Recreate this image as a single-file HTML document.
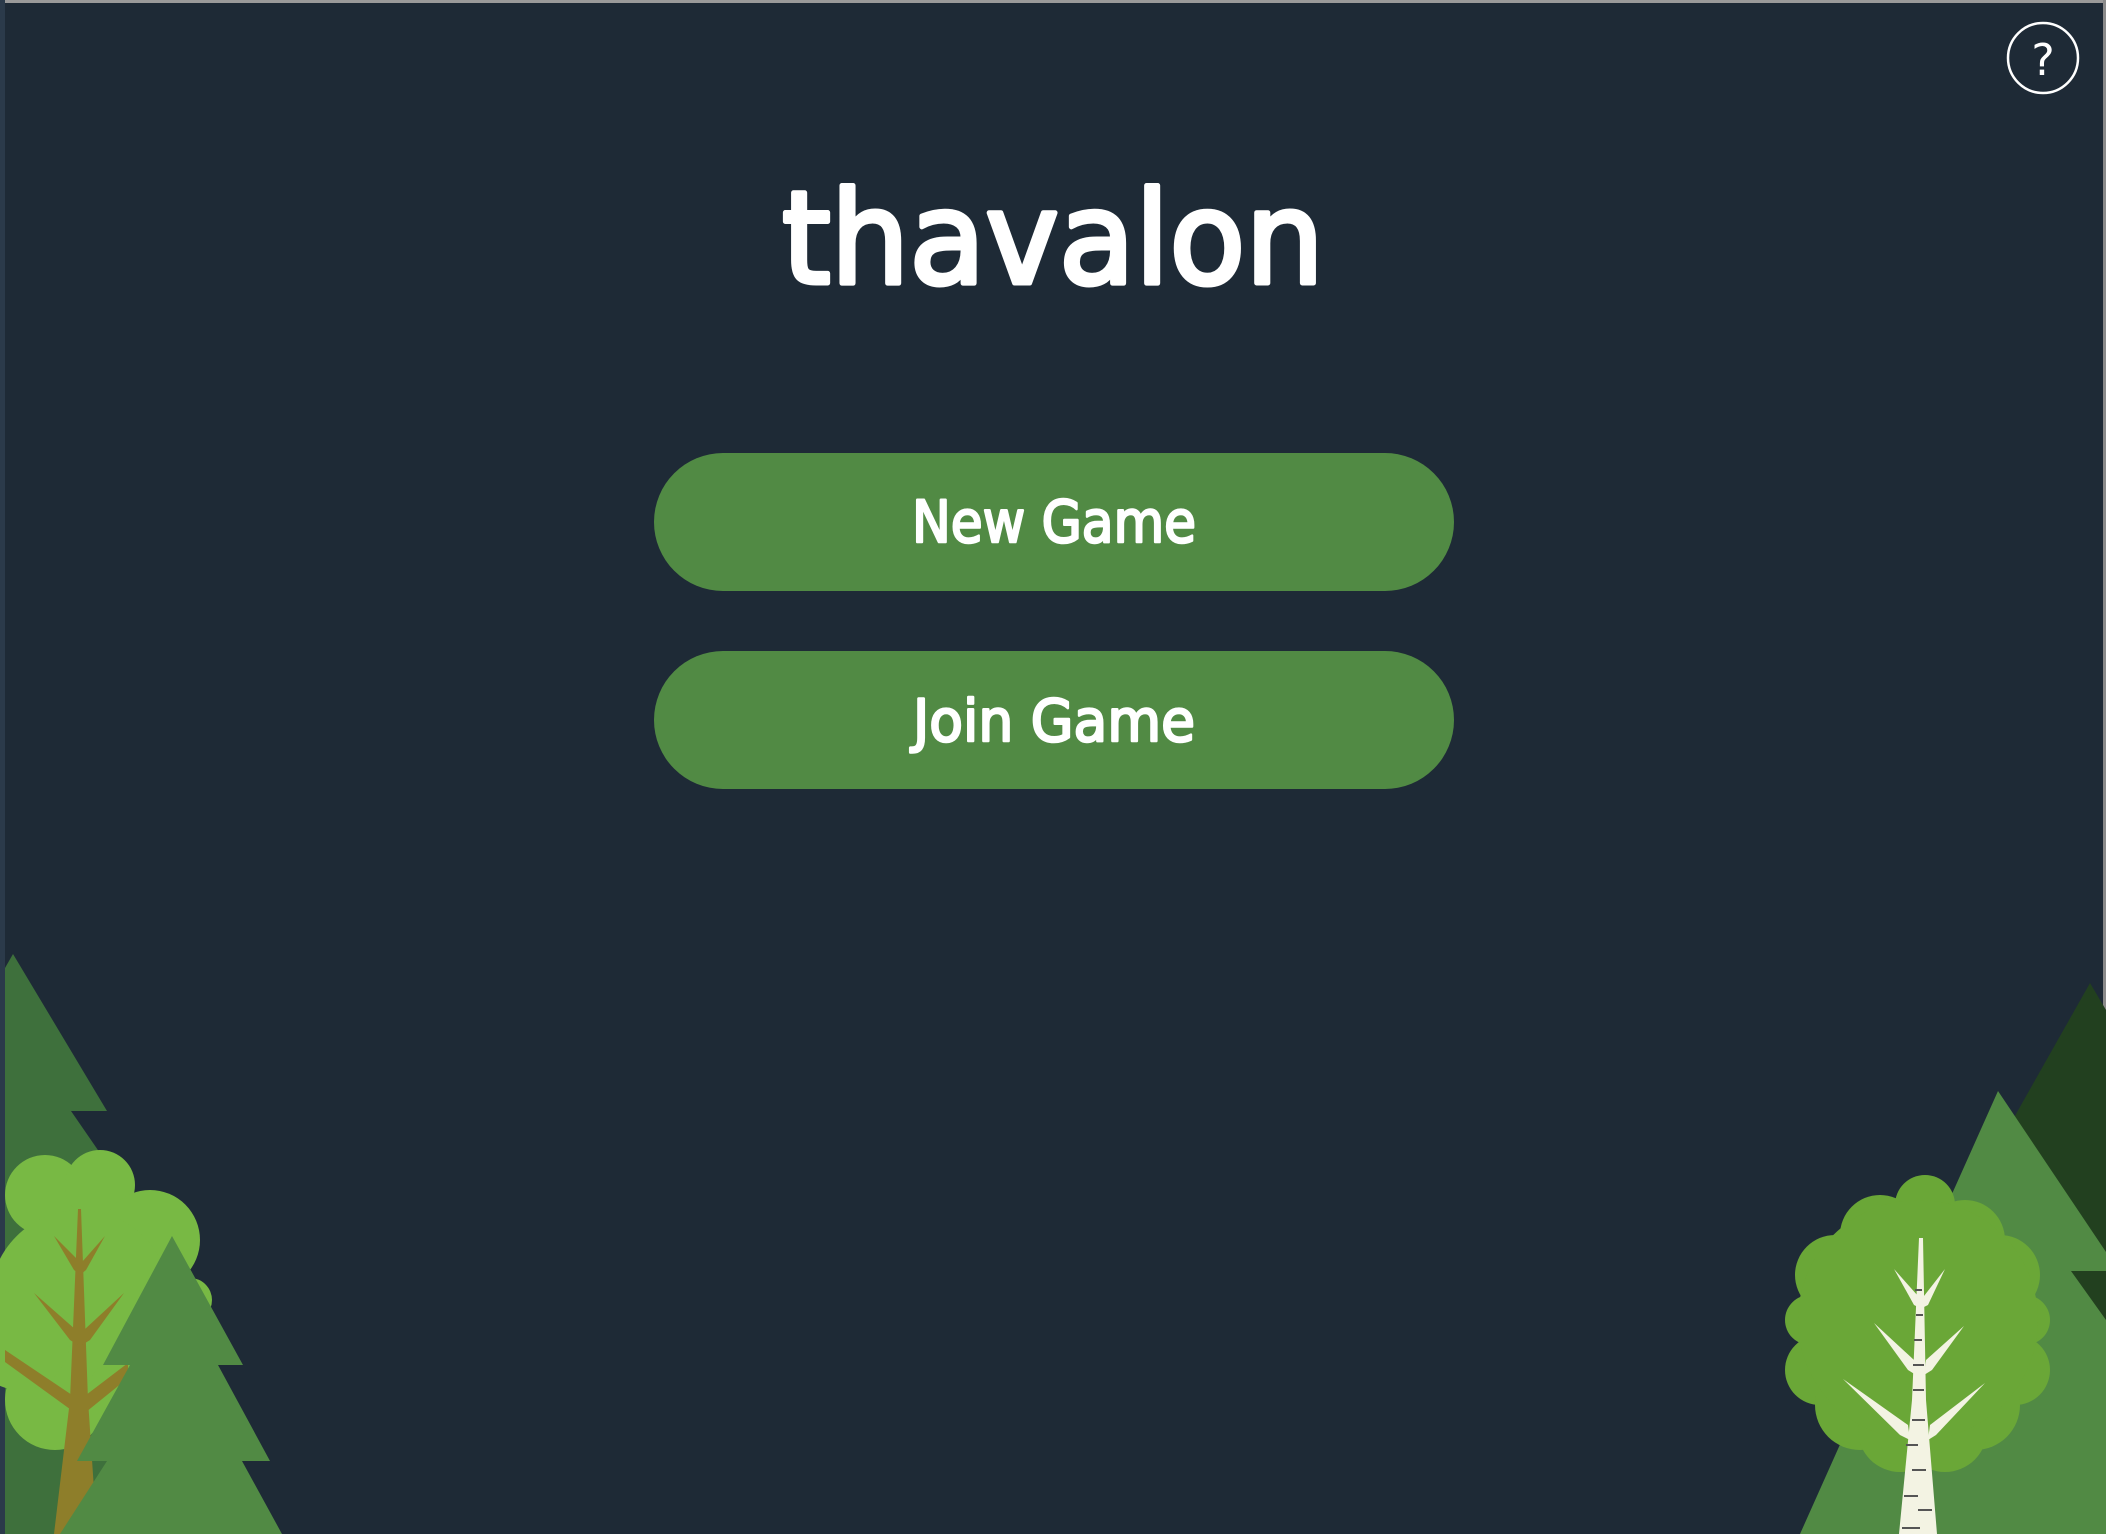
<!DOCTYPE html>
<html><head><meta charset="utf-8"><style>
html,body{margin:0;padding:0;}
body{width:2106px;height:1534px;background:#1e2a36;position:relative;overflow:hidden;}
.btn{position:absolute;left:654px;width:800px;height:138px;border-radius:69px;background:#518a44;}
svg{position:absolute;left:0;top:0;}
</style></head><body>
<svg width="2106" height="1534" viewBox="0 0 2106 1534">
  <rect x="0" y="0" width="2106" height="3" fill="#9a9a9a"/>
  <rect x="0" y="0" width="5" height="1534" fill="#2b3a4a"/>
  <rect x="2103" y="0" width="3" height="1534" fill="#8a8a8a"/>
  <text x="1053" y="283" text-anchor="middle" font-family="DejaVu Sans, sans-serif" font-size="128" fill="#fff" stroke="#fff" stroke-width="5" stroke-linejoin="round" textLength="542" lengthAdjust="spacingAndGlyphs">thavalon</text>
  <circle cx="2043" cy="58" r="35" fill="none" stroke="#fff" stroke-width="2.5"/>
  <text x="2043" y="75" text-anchor="middle" font-family="DejaVu Sans, sans-serif" font-size="44" fill="#fff">?</text>
</svg>
<div class="btn" style="top:453px"></div>
<div class="btn" style="top:651px"></div>
<svg width="2106" height="1534" viewBox="0 0 2106 1534">
  <g font-family="DejaVu Sans, sans-serif" font-size="58" fill="#fff" stroke="#fff" stroke-width="2.5" stroke-linejoin="round" text-anchor="middle">
  <text x="1054" y="542" textLength="284" lengthAdjust="spacingAndGlyphs">New Game</text>
  <text x="1054" y="741" textLength="282" lengthAdjust="spacingAndGlyphs">Join Game</text>
  </g>

  <polygon points="13,954 107,1111 71,1111 160,1240 120,1240 220,1400 220,1534 5,1534 5,968" fill="#3e703c"/>
  <g fill="#78b944">
    <circle cx="45" cy="1195" r="40"/>
    <circle cx="100" cy="1185" r="35"/>
    <circle cx="150" cy="1240" r="50"/>
    <circle cx="190" cy="1300" r="22"/>
    <circle cx="150" cy="1330" r="60"/>
    <circle cx="80" cy="1300" r="90"/>
    <circle cx="55" cy="1400" r="50"/>
    <circle cx="20" cy="1340" r="50"/>
    <circle cx="130" cy="1400" r="45"/>
  </g>
  <g fill="#8e7e2a">
    <polygon points="78,1209 81,1209 88,1400 97,1534 54,1534 70,1400"/>
    <polygon points="54,1236 80,1262 81,1275 74,1270"/>
    <polygon points="105,1236 82,1262 80,1275 86,1270"/>
    <polygon points="34,1293 76,1330 78,1345 70,1340"/>
    <polygon points="124,1293 84,1330 82,1345 90,1340"/>
    <polygon points="5,1350 72,1395 74,1412 5,1362"/>
    <polygon points="128,1363 86,1395 86,1412 128,1378"/>
  </g>
  <polygon points="172,1236 243,1365 218,1365 270,1461 242,1461 282,1534 60,1534 107,1461 77,1461 130,1365 103,1365" fill="#518a44"/>

  <polygon points="2090,983 2106,1010 2106,1534 1990,1534 1990,1160" fill="#22401f"/>
  <polygon points="1998,1091 2106,1252 2106,1271 2071,1271 2106,1320 2106,1534 1800,1534" fill="#518a44"/>
  <g fill="#6aa737">
    <circle cx="1925" cy="1205" r="30"/>
    <circle cx="1880" cy="1235" r="40"/>
    <circle cx="1965" cy="1240" r="40"/>
    <circle cx="1835" cy="1275" r="40"/>
    <circle cx="2000" cy="1275" r="40"/>
    <circle cx="1810" cy="1320" r="25"/>
    <circle cx="2025" cy="1320" r="25"/>
    <circle cx="1820" cy="1370" r="35"/>
    <circle cx="2015" cy="1370" r="35"/>
    <circle cx="1860" cy="1405" r="45"/>
    <circle cx="1975" cy="1405" r="45"/>
    <circle cx="1900" cy="1430" r="42"/>
    <circle cx="1945" cy="1430" r="42"/>
    <circle cx="1918" cy="1320" r="120"/>
  </g>
  <g fill="#f3f3e3">
    <polygon points="1919,1238 1923,1238 1926,1400 1937,1534 1899,1534 1912,1400"/>
    <polygon points="1894,1269 1918,1296 1920,1308 1914,1305"/>
    <polygon points="1945,1269 1924,1296 1922,1308 1928,1305"/>
    <polygon points="1874,1323 1914,1360 1916,1375 1908,1370"/>
    <polygon points="1964,1326 1926,1360 1924,1375 1932,1370"/>
    <polygon points="1843,1379 1908,1425 1910,1440 1900,1435"/>
    <polygon points="1985,1383 1930,1425 1928,1440 1936,1435"/>
  </g>
  <g stroke="#555" stroke-width="2">
    <line x1="1915" y1="1290" x2="1922" y2="1290"/><line x1="1916" y1="1315" x2="1923" y2="1315"/>
    <line x1="1914" y1="1340" x2="1922" y2="1340"/><line x1="1913" y1="1365" x2="1924" y2="1365"/>
    <line x1="1913" y1="1390" x2="1924" y2="1390"/><line x1="1912" y1="1420" x2="1925" y2="1420"/>
    <line x1="1906" y1="1445" x2="1918" y2="1445"/><line x1="1912" y1="1470" x2="1926" y2="1470"/>
    <line x1="1904" y1="1496" x2="1918" y2="1496"/><line x1="1918" y1="1510" x2="1932" y2="1510"/>
    <line x1="1902" y1="1528" x2="1920" y2="1528"/>
  </g>
</svg>
</body></html>
